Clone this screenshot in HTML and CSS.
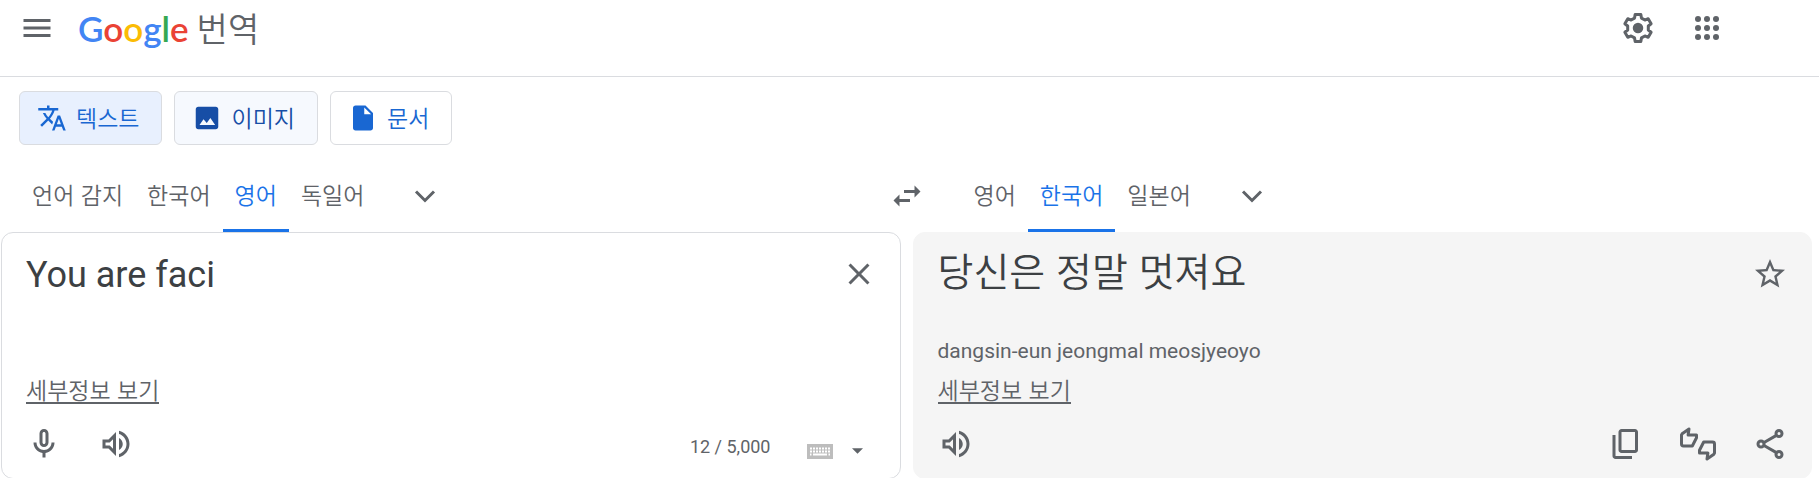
FILE: index.html
```
<!DOCTYPE html>
<html lang="ko">
	<head>
		<meta charset="utf-8">
		<title>Google 번역</title>
		<meta name="viewport" content="width=device-width, initial-scale=1">
		<link rel="stylesheet" href="styles.css">
	</head>
	<body>
		<header class="topbar">
			<button class="icon-btn" type="button" aria-label="기본 메뉴">
				<svg class="icon" viewBox="0 0 24 24"><path d="M3 18h18v-2H3v2zm0-5h18v-2H3v2zm0-7v2h18V6H3z"/></svg>
			</button>
			<a class="brand" href="#">
				<span class="logo"><span class="blue">G</span><span class="red">o</span><span class="yellow">o</span><span class="blue">g</span><span class="green">l</span><span class="red">e</span></span>
				<span class="product">번역</span>
			</a>
			<div class="top-actions">
				<button class="icon-btn" type="button" aria-label="설정">
					<svg class="icon" viewBox="0 0 24 24">
						<path class="line round" d="M13.9 3l.4 2.4 2.3 1.3 2.2-.9 1.95 3.36-1.88 1.5v2.68l1.88 1.5-1.95 3.36-2.2-.9-2.3 1.3-.4 2.4h-3.8l-.4-2.4-2.3-1.3-2.2.9-1.95-3.36 1.88-1.5v-2.68l-1.88-1.5L5.2 5.8l2.2.9 2.3-1.3.4-2.4z"/>
						<circle cx="12" cy="12" r="3.5"/>
					</svg>
				</button>
				<button class="icon-btn" type="button" aria-label="Google 앱">
					<svg class="icon" viewBox="0 0 24 24">
						<circle cx="6" cy="6" r="2"/><circle cx="12" cy="6" r="2"/><circle cx="18" cy="6" r="2"/>
						<circle cx="6" cy="12" r="2"/><circle cx="12" cy="12" r="2"/><circle cx="18" cy="12" r="2"/>
						<circle cx="6" cy="18" r="2"/><circle cx="12" cy="18" r="2"/><circle cx="18" cy="18" r="2"/>
					</svg>
				</button>
			</div>
		</header>

		<main>
			<nav class="modes">
				<button class="mode selected" type="button">
					<svg viewBox="0 0 24 24"><path d="M12.87 15.07l-2.54-2.51.03-.03c1.74-1.94 2.98-4.17 3.71-6.53H17V4h-7V2H8v2H1v1.99h11.17C11.5 7.92 10.44 9.75 9 11.35 8.07 10.32 7.3 9.19 6.69 8h-2c.73 1.63 1.73 3.17 2.98 4.56l-5.09 5.02L4 19l5-5 3.11 3.11.76-2.04zM18.5 10h-2L12 22h2l1.12-3h4.75L21 22h2l-4.5-12zm-2.62 7l1.62-4.33L19.12 17h-3.24z"/></svg>
					<span>텍스트</span>
				</button>
				<button class="mode hovered" type="button">
					<svg viewBox="0 0 24 24"><path d="M21 19V5c0-1.1-.9-2-2-2H5c-1.1 0-2 .9-2 2v14c0 1.1.9 2 2 2h14c1.1 0 2-.9 2-2zM6 17.5L9.2 13l2.6 3 2.9-4 3.8 5.5H6z"/></svg>
					<span>이미지</span>
				</button>
				<button class="mode" type="button">
					<svg viewBox="0 0 24 24"><path d="M14 2H6c-1.1 0-2 .9-2 2v16c0 1.1.9 2 2 2h12c1.1 0 2-.9 2-2V8l-6-6zm-1 7V3.5L18.5 9H13z"/></svg>
					<span>문서</span>
				</button>
			</nav>

			<div class="languages">
				<div class="tabs source-tabs">
					<button class="tab" type="button">언어 감지</button>
					<button class="tab" type="button">한국어</button>
					<button class="tab active" type="button">영어</button>
					<button class="tab" type="button">독일어</button>
					<button class="icon-btn more" type="button" aria-label="출발어 더보기">
						<svg class="icon" viewBox="0 0 24 24"><path class="line" d="M6 9l6 6 6-6"/></svg>
					</button>
				</div>
				<button class="icon-btn swap" type="button" aria-label="언어 바꾸기">
					<svg class="icon" viewBox="0 0 24 24"><path d="M6.99 11L3 15l3.99 4v-3H14v-2H6.99v-3zM21 9l-3.99-4v3H10v2h7.01v3L21 9z"/></svg>
				</button>
				<div class="tabs target-tabs">
					<button class="tab" type="button">영어</button>
					<button class="tab active" type="button">한국어</button>
					<button class="tab" type="button">일본어</button>
					<button class="icon-btn more" type="button" aria-label="도착어 더보기">
						<svg class="icon" viewBox="0 0 24 24"><path class="line" d="M6 9l6 6 6-6"/></svg>
					</button>
				</div>
			</div>

			<div class="panels">
				<section class="panel source">
					<div class="panel-top">
						<textarea class="source-text" rows="1" aria-label="원본 텍스트" spellcheck="false">You are faci</textarea>
						<button class="icon-btn" type="button" aria-label="원본 텍스트 삭제">
							<svg class="icon" viewBox="0 0 24 24"><path d="M19 6.41L17.59 5 12 10.59 6.41 5 5 6.41 10.59 12 5 17.59 6.41 19 12 13.41 17.59 19 19 17.59 13.41 12z"/></svg>
						</button>
					</div>
					<a class="details" href="#">세부정보 보기</a>
					<div class="tools">
						<button class="icon-btn" type="button" aria-label="음성으로 번역">
							<svg class="icon" viewBox="0 0 24 24"><path d="M12 14c1.66 0 3-1.34 3-3V5c0-1.66-1.34-3-3-3S9 3.34 9 5v6c0 1.66 1.34 3 3 3zm-1-9c0-.55.45-1 1-1s1 .45 1 1v6c0 .55-.45 1-1 1s-1-.45-1-1V5zm6 6c0 2.76-2.24 5-5 5s-5-2.24-5-5H5c0 3.53 2.61 6.43 6 6.92V21h2v-3.08c3.39-.49 6-3.39 6-6.92h-2z"/></svg>
						</button>
						<button class="icon-btn" type="button" aria-label="원본 텍스트 듣기">
							<svg class="icon" viewBox="0 0 24 24"><path d="M3 9v6h4l5 5V4L7 9H3zm7-.17v6.34L7.83 13H5v-2h2.83L10 8.83zM16.5 12c0-1.77-1.02-3.29-2.5-4.03v8.05c1.48-.73 2.5-2.25 2.5-4.02zM14 3.23v2.06c2.89.86 5 3.54 5 6.71s-2.11 5.85-5 6.71v2.06c4.01-.91 7-4.49 7-8.77s-2.99-7.86-7-8.77z"/></svg>
						</button>
						<span class="counter">12 / 5,000</span>
						<button class="keyboard" type="button" aria-label="입력 도구">
							<svg class="keys" viewBox="0 0 26 15">
								<path class="case" d="M0 0h26v15H0z"/>
								<path class="key-row" d="M3 4.5h20M3 7.5h20"/>
								<path class="space-row" d="M3 10.5h1.5M6 10.5h14M21.5 10.5H23"/>
							</svg>
							<svg class="caret" viewBox="0 0 10 5"><path d="M0 0h10L5 5z"/></svg>
						</button>
					</div>
				</section>

				<section class="panel target">
					<div class="panel-top">
						<p class="result">당신은 정말 멋져요</p>
						<button class="icon-btn" type="button" aria-label="번역 저장">
							<svg class="icon" viewBox="0 0 24 24"><path d="M22 9.24l-7.19-.62L12 2 9.19 8.63 2 9.24l5.46 4.73L5.82 21 12 17.27 18.18 21l-1.63-7.03L22 9.24zM12 15.4l-3.76 2.27 1-4.28-3.32-2.88 4.38-.38L12 6.1l1.71 4.04 4.38.38-3.32 2.88 1 4.28L12 15.4z"/></svg>
						</button>
					</div>
					<p class="romanized">dangsin-eun jeongmal meosjyeoyo</p>
					<a class="details" href="#">세부정보 보기</a>
					<div class="tools">
						<button class="icon-btn" type="button" aria-label="번역 듣기">
							<svg class="icon" viewBox="0 0 24 24"><path d="M3 9v6h4l5 5V4L7 9H3zm7-.17v6.34L7.83 13H5v-2h2.83L10 8.83zM16.5 12c0-1.77-1.02-3.29-2.5-4.03v8.05c1.48-.73 2.5-2.25 2.5-4.02zM14 3.23v2.06c2.89.86 5 3.54 5 6.71s-2.11 5.85-5 6.71v2.06c4.01-.91 7-4.49 7-8.77s-2.99-7.86-7-8.77z"/></svg>
						</button>
						<div class="share-tools">
							<button class="icon-btn" type="button" aria-label="번역 복사">
								<svg class="icon" viewBox="0 0 24 24"><path d="M9 18q-.825 0-1.412-.587Q7 16.825 7 16V4q0-.825.588-1.413Q8.175 2 9 2h9q.825 0 1.413.587Q20 3.175 20 4v12q0 .825-.587 1.413Q18.825 18 18 18Zm0-2h9V4H9v12Zm-4 6q-.825 0-1.412-.587Q3 20.825 3 20V6h2v14h11v2Z"/></svg>
							</button>
							<button class="icon-btn" type="button" aria-label="번역 평가">
								<svg class="icon" viewBox="0 0 24 24">
									<path class="line round" d="M1 6v6a1.3 1.3 0 0 0 1.3 1.3h5.9L11 7.8V6H5.4l.6-4L1.4 5.2z"/>
									<path class="line round" d="M23 18v-6a1.3 1.3 0 0 0-1.3-1.3h-5.9L13 16.2V18h5.6l-.6 4 4.6-3.2z"/>
								</svg>
							</button>
							<button class="icon-btn" type="button" aria-label="번역 공유">
								<svg class="icon" viewBox="0 0 24 24">
									<path class="line" d="M8 11l8-4.6M8 13l8 4.6"/>
									<circle class="line" cx="18" cy="5" r="2"/>
									<circle class="line" cx="6" cy="12" r="2"/>
									<circle class="line" cx="18" cy="19" r="2"/>
								</svg>
							</button>
						</div>
					</div>
				</section>
			</div>
		</main>
	</body>
</html>
```
FILE: styles.css
```
* {
	box-sizing: border-box;
}
html {
	overflow: hidden;
}
body {
	margin: 0;
	background-color: #fff;
	color: #5f6368;
	font-family: Roboto, "Noto Sans CJK KR", sans-serif;
	font-size: 21px;
}
button {
	margin: 0;
	padding: 0;
	border: none;
	background: none;
	color: inherit;
	font: inherit;
	cursor: pointer;
}
p {
	margin: 0;
}
svg {
	display: block;
	fill: currentColor;
}

/* icons */
.icon-btn {
	flex: none;
}
.icon {
	width: 36px;
	height: 36px;
}
.line {
	fill: none;
	stroke: currentColor;
	stroke-width: 2;
}
.round {
	stroke-linejoin: round;
}

/* header */
.topbar {
	display: flex;
	align-items: center;
	height: 77px;
	padding: 0 94px 20px 19px;
	border-bottom: 1px solid #dadce0;
}
.brand {
	display: flex;
	align-items: center;
	gap: 8px;
	margin-left: 23px;
	color: #5f6368;
	text-decoration: none;
}
.logo {
	font: 600 35px/48px Lato, sans-serif;
}
.product {
	padding-bottom: 1px;
	font: 350 34px/48px "Noto Sans CJK KR", sans-serif;
}
.blue {
	color: #4285f4;
}
.red {
	color: #ea4335;
}
.yellow {
	color: #fbbc05;
}
.green {
	color: #34a853;
}
.top-actions {
	display: flex;
	gap: 33px;
	margin-left: auto;
}

/* text / image / document */
.modes {
	display: flex;
	gap: 12px;
	padding: 14px 19px 15px;
}
.mode {
	display: flex;
	align-items: center;
	gap: 9px;
	height: 54px;
	padding: 0 22px 0 17px;
	border: 1px solid #dadce0;
	border-radius: 6px;
	color: #1967d2;
	font: 350 23px/32px "Noto Sans CJK KR", sans-serif;
}
.mode svg {
	width: 30px;
	height: 30px;
}
.mode span {
	padding-bottom: 2px;
}
.mode.selected {
	background-color: #e8f0fe;
}
.mode.hovered {
	background-color: #f6f9fe;
	color: #174ea6;
}

/* language bar */
.languages, .panels {
	display: grid;
	grid-template-columns: 1fr 12px 1fr;
	padding: 0 7px 0 1px;
}
.tabs {
	display: flex;
	align-items: center;
	height: 72px;
}
.source-tabs {
	padding-left: 19px;
}
.target-tabs {
	padding-left: 49px;
}
.tab {
	height: 72px;
	padding: 0 12px 1px;
	border-bottom: 3px solid transparent;
	font: 350 23px/32px "Noto Sans CJK KR", sans-serif;
}
.tab.active {
	border-bottom-color: #1a73e8;
	color: #1a73e8;
}
.more {
	margin-left: 31px;
}
.swap {
	place-self: center;
}

/* translation panels */
.panel {
	display: flex;
	flex-direction: column;
	height: 247px;
	padding: 0 23px 16px 24px;
	border: 1px solid #dadce0;
	border-radius: 12px;
}
.target {
	grid-column: 3;
	border-color: #f5f5f5;
	background-color: #f5f5f5;
}
.panel-top {
	display: flex;
	justify-content: space-between;
	align-items: flex-start;
	padding-top: 23px;
}
.source-text {
	flex: 1;
	height: 38px;
	padding: 0;
	border: none;
	outline: none;
	resize: none;
	overflow: hidden;
	background: none;
	color: #3c4043;
	font: 36px/38px Roboto, sans-serif;
}
.result {
	color: #3c4043;
	font: 350 39px/26px "Noto Sans CJK KR", sans-serif;
}
.romanized {
	margin-top: 47px;
	line-height: 24px;
}
.details {
	align-self: flex-start;
	margin-top: auto;
	border-bottom: 2px solid #5f6368;
	color: #5f6368;
	font: 350 23px/26px "Noto Sans CJK KR", sans-serif;
	text-decoration: none;
}
.tools {
	display: flex;
	align-items: center;
	gap: 36px;
	height: 36px;
	margin-top: 22px;
}
.counter {
	margin-left: auto;
	padding-top: 4px;
	font-size: 18px;
}
.keyboard {
	display: flex;
	align-items: center;
	gap: 19px;
	padding: 14px 14px 0 0;
}
.keys {
	width: 26px;
	height: 15px;
}
.caret {
	width: 11px;
	height: 6px;
}
.case {
	fill: #bdbdbd;
}
.key-row, .space-row {
	stroke: #fff;
	stroke-width: 2;
}
.key-row {
	stroke-dasharray: 2 1;
}
.share-tools {
	display: flex;
	gap: 36px;
	margin-left: auto;
}
```
